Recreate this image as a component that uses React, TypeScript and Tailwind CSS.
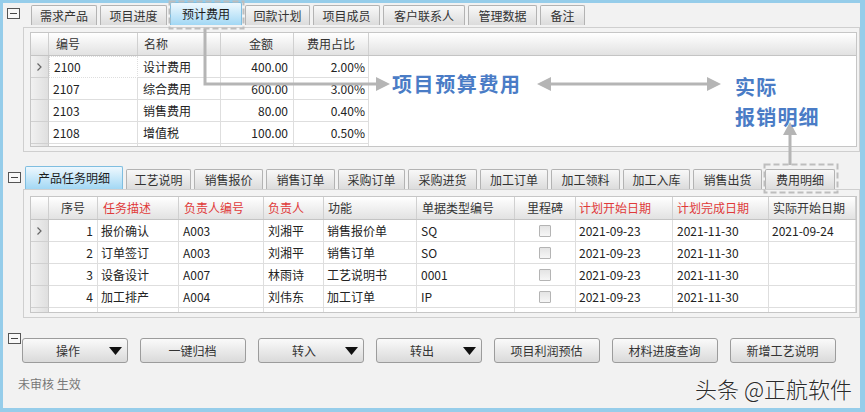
import clsx from "clsx";

type Col = { label: string; w: string; red?: boolean; head?: string; cell?: string };

const tabsTop = [
  { label: "需求产品", w: "w-[66px]" },
  { label: "项目进度", w: "w-[67px]" },
  { label: "预计费用", w: "w-[72px]", active: true },
  { label: "回款计划", w: "w-[65px]" },
  { label: "项目成员", w: "w-[67px]" },
  { label: "客户联系人", w: "w-[82px]" },
  { label: "管理数据", w: "w-[69px]" },
  { label: "备注", w: "w-[45px]" },
];

const tabsMid = [
  { label: "产品任务明细", w: "w-[98px]", active: true },
  { label: "工艺说明", w: "w-[65px]" },
  { label: "销售报价", w: "w-[69px]" },
  { label: "销售订单", w: "w-[69px]" },
  { label: "采购订单", w: "w-[67px]" },
  { label: "采购进货", w: "w-[69px]" },
  { label: "加工订单", w: "w-[68px]" },
  { label: "加工领料", w: "w-[69px]" },
  { label: "加工入库", w: "w-[67px]" },
  { label: "销售出货", w: "w-[69px]" },
  { label: "费用明细", w: "w-[70px]" },
];

const costCols: Col[] = [
  { label: "编号", w: "w-[89px]", head: "justify-start pl-[7px]", cell: "justify-start pl-[4px]" },
  { label: "名称", w: "w-[83px]", head: "justify-start pl-[6px]", cell: "justify-start pl-[5px]" },
  { label: "金额", w: "w-[73px]", head: "justify-center pl-[8px]", cell: "justify-end pr-[5px]" },
  { label: "费用占比", w: "w-[75px]", head: "justify-center", cell: "justify-end pr-[3px]" },
];

const costRows = [
  ["2100", "设计费用", "400.00", "2.00%"],
  ["2107", "综合费用", "600.00", "3.00%"],
  ["2103", "销售费用", "80.00", "0.40%"],
  ["2108", "增值税", "100.00", "0.50%"],
];

const taskCols: Col[] = [
  { label: "序号", w: "w-[49px]", head: "justify-center", cell: "justify-end pr-[4px]" },
  { label: "任务描述", w: "w-[81px]", red: true, head: "justify-start pl-[5px]", cell: "justify-start pl-[3px]" },
  { label: "负责人编号", w: "w-[85px]", red: true, head: "justify-start pl-[5px]", cell: "justify-start pl-[4px]" },
  { label: "负责人", w: "w-[60px]", red: true, head: "justify-start pl-[4px]", cell: "justify-start pl-[4px]" },
  { label: "功能", w: "w-[93px]", head: "justify-start pl-[4px]", cell: "justify-start pl-[3px]" },
  { label: "单据类型编号", w: "w-[98px]", head: "justify-start pl-[5px]", cell: "justify-start pl-[4px]" },
  { label: "里程碑", w: "w-[61px]", head: "justify-center", cell: "justify-center" },
  { label: "计划开始日期", w: "w-[97px]", red: true, head: "justify-start pl-[3px]", cell: "justify-start pl-[3px]" },
  { label: "计划完成日期", w: "w-[96px]", red: true, head: "justify-start pl-[4px]", cell: "justify-start pl-[4px]" },
  { label: "实际开始日期", w: "flex-1", head: "justify-start pl-[4px]", cell: "justify-start pl-[3px]" },
];

const taskRows = [
  ["1", "报价确认", "A003", "刘湘平", "销售报价单", "SQ", "", "2021-09-23", "2021-11-30", "2021-09-24"],
  ["2", "订单签订", "A003", "刘湘平", "销售订单", "SO", "", "2021-09-23", "2021-11-30", ""],
  ["3", "设备设计", "A007", "林雨诗", "工艺说明书", "0001", "", "2021-09-23", "2021-11-30", ""],
  ["4", "加工排产", "A004", "刘伟东", "加工订单", "IP", "", "2021-09-23", "2021-11-30", ""],
];

const buttons = [
  { label: "操作", drop: true },
  { label: "一键归档" },
  { label: "转入", drop: true },
  { label: "转出", drop: true },
  { label: "项目利润预估" },
  { label: "材料进度查询" },
  { label: "新增工艺说明" },
];

function Collapse() {
  return (
    <div className="flex h-[11px] w-[13px] items-center justify-center border border-[#555] bg-[#f8f8f8]">
      <div className="h-[1px] w-[7px] bg-[#444]" />
    </div>
  );
}

function Tab({ label, w, active }: { label: string; w: string; active?: boolean }) {
  return (
    <div
      className={clsx(
        w,
        "flex shrink-0 items-center justify-center rounded-t-[2px] border border-b-0 text-[12px]",
        active
          ? "h-[23px] border-[#7fbee0] bg-linear-to-b from-[#eef8fe] to-[#a2d8f4] text-[#1c1c1c]"
          : "h-[20px] border-[#b3b3b3] bg-linear-to-b from-[#f8f8f8] to-[#dcdcdc] text-[#333]"
      )}
    >
      {label}
    </div>
  );
}

function Indicator({ current, stub }: { current?: boolean; stub?: boolean }) {
  return (
    <div
      className={clsx(
        "flex w-[18px] shrink-0 items-center justify-center border-r border-[#c9c9c9] bg-linear-to-r from-[#f1f1f1] to-[#dfdfdf]",
        !stub && "border-b border-b-[#d0d0d0]"
      )}
    >
      {current && (
        <svg width="5" height="8" viewBox="0 0 5 8">
          <polyline points="0.5,0.5 4,4 0.5,7.5" fill="none" stroke="#666" strokeWidth="1.2" />
        </svg>
      )}
    </div>
  );
}

function HeaderRow({ cols, rest }: { cols: Col[]; rest?: boolean }) {
  return (
    <div className="flex h-[23px] border-b border-[#c4c4c4] bg-linear-to-b from-white to-[#e2e2e2]">
      <div className="w-[18px] shrink-0 border-r border-[#cfcfcf]" />
      {cols.map((c) => (
        <div
          key={c.label}
          className={clsx(
            c.w,
            c.head,
            "flex shrink-0 items-center border-r border-[#d0d0d0] text-[12px]",
            c.red ? "text-[#e03a3a]" : "text-[#333]"
          )}
        >
          {c.label}
        </div>
      ))}
      {rest && <div className="flex-1" />}
    </div>
  );
}

function CostGrid() {
  return (
    <div className="flex h-[115px] flex-col overflow-hidden border border-[#c6c6c6] bg-white">
      <HeaderRow cols={costCols} rest />
      {costRows.map((r, i) => (
        <div key={r[0]} className="flex h-[22px] shrink-0">
          <Indicator current={i === 0} />
          {costCols.map((c, j) => (
            <div
              key={c.label}
              className={clsx(
                c.w,
                c.cell,
                "flex shrink-0 items-center border-b border-r border-[#dedede] text-[12px] text-[#222]",
                i === 0 && j === 0 && "border border-dotted border-[#666]"
              )}
            >
              {r[j]}
            </div>
          ))}
        </div>
      ))}
      <div className="flex flex-1">
        <Indicator stub />
        {costCols.map((c) => (
          <div key={c.label} className={clsx(c.w, "shrink-0 border-r border-[#dedede]")} />
        ))}
      </div>
    </div>
  );
}

function TaskGrid() {
  return (
    <div className="flex h-[117px] flex-col overflow-hidden border border-[#c6c6c6] bg-white">
      <HeaderRow cols={taskCols} />
      {taskRows.map((r, i) => (
        <div key={r[0]} className="flex h-[22px] shrink-0">
          <Indicator current={i === 0} />
          {taskCols.map((c, j) => (
            <div
              key={c.label}
              className={clsx(
                c.w,
                c.cell,
                "flex shrink-0 items-center border-b border-r border-[#dedede] text-[12px] text-[#222]"
              )}
            >
              {j === 6 ? (
                <div className="h-[12px] w-[12px] rounded-[1px] border border-[#b4b4b4] bg-linear-to-b from-[#e4e4e4] to-[#f6f6f6]" />
              ) : (
                r[j]
              )}
            </div>
          ))}
        </div>
      ))}
      <div className="flex flex-1">
        <Indicator stub />
        {taskCols.map((c) => (
          <div key={c.label} className={clsx(c.w, "shrink-0 border-r border-[#dedede]")} />
        ))}
      </div>
    </div>
  );
}

function Button({ label, drop }: { label: string; drop?: boolean }) {
  return (
    <div className="flex h-[25px] w-[106px] shrink-0 items-center rounded-[3px] border border-[#9c9c9c] bg-linear-to-b from-[#fafafa] to-[#dadada] pl-[4px] pr-[5px] text-[12px] text-[#333]">
      <span className="flex-1 text-center">{label}</span>
      {drop && (
        <svg width="13" height="8" viewBox="0 0 13 8">
          <polygon points="0,0 13,0 6.5,8" fill="#111" />
        </svg>
      )}
    </div>
  );
}

export default function App() {
  return (
    <div className="relative h-[412px] w-[865px] overflow-hidden font-['Noto_Sans_CJK_SC','Noto_Sans',sans-serif]">
      <div className="flex h-full w-full flex-col border-b-[4px] border-l-[3px] border-r-[5px] border-t-[3px] border-[#96cdea] bg-[#f2f2f2]">
        {/* 预计费用 */}
        <div className="flex">
          <div className="w-[20px] shrink-0 pl-[4px] pt-[5px]">
            <Collapse />
          </div>
          <div className="flex flex-1 flex-col">
            <div className="flex h-[22px] items-end gap-[3px] pl-[8px]">
              {tabsTop.map((t) => (
                <Tab key={t.label} {...t} />
              ))}
            </div>
            <div className="mt-[2px] h-[125px] border border-[#cfcfcf] bg-[#f3f3f3] pl-[6px] pr-[2px] pt-[4px]">
              <CostGrid />
            </div>
          </div>
        </div>

        {/* 产品任务明细 */}
        <div className="mt-[14px] flex">
          <div className="w-[20px] shrink-0 pl-[5px] pt-[6px]">
            <Collapse />
          </div>
          <div className="flex flex-1 flex-col">
            <div className="flex h-[23px] items-end gap-[3px] pl-[2px]">
              {tabsMid.map((t) => (
                <Tab key={t.label} {...t} />
              ))}
            </div>
            <div className="h-[129px] border border-[#cfcfcf] bg-[#f3f3f3] pl-[6px] pr-[2px] pt-[6px]">
              <TaskGrid />
            </div>
          </div>
        </div>

        {/* buttons */}
        <div className="mt-[15px] flex">
          <div className="w-[19px] shrink-0 pl-[5px]">
            <Collapse />
          </div>
          <div className="mt-[5px] flex gap-[12px]">
            {buttons.map((b) => (
              <Button key={b.label} {...b} />
            ))}
          </div>
        </div>

        <div className="mt-[13px] flex items-start justify-between pl-[15px] pr-[8px]">
          <span className="text-[12px] leading-[16px] text-[#777]">未审核 生效</span>
          <span className="text-[22px] font-light leading-[24px] text-[#2a2a2a] [text-shadow:0_0_2px_#fff]">头条 @正航软件</span>
        </div>
      </div>

      {/* annotations */}
      <svg className="pointer-events-none absolute left-0 top-0" width="865" height="412">
        <rect x="169.5" y="1.5" width="74" height="27" fill="none" stroke="#bdbdbd" strokeWidth="2" strokeDasharray="6 3" />
        <rect x="764.5" y="164.5" width="73" height="28" fill="none" stroke="#bdbdbd" strokeWidth="2" strokeDasharray="6 3" />
        <polyline points="205,29 205,84 378,84" fill="none" stroke="#b5b5b5" strokeWidth="3" />
        <polygon points="376,77 390,84 376,91" fill="#b5b5b5" />
        <line x1="549" y1="84" x2="709" y2="84" stroke="#b5b5b5" strokeWidth="3" />
        <polygon points="537,84 551,77 551,91" fill="#b5b5b5" />
        <polygon points="721,84 707,77 707,91" fill="#b5b5b5" />
        <line x1="790" y1="133" x2="790" y2="165" stroke="#b5b5b5" strokeWidth="3" />
        <polygon points="790,122 783,135 797,135" fill="#b5b5b5" />
      </svg>
      <div className="absolute left-[392px] top-[72px] text-[20px] font-bold leading-[24px] tracking-[1.6px] text-[#4a7cc6]">
        项目预算费用
      </div>
      <div className="absolute left-[735px] top-[72px] text-[20px] font-bold leading-[30px] tracking-[1.2px] text-[#4a7cc6]">
        <div>实际</div>
        <div>报销明细</div>
      </div>
    </div>
  );
}
